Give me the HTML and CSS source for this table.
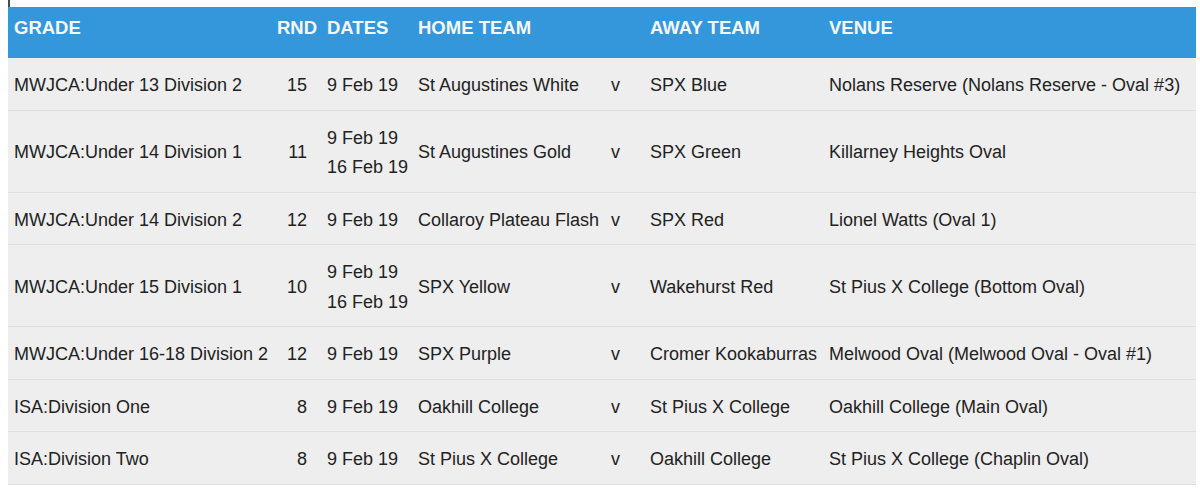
FILE: index.html
```html
<!DOCTYPE html>
<html>
<head>
<meta charset="utf-8">
<link rel="stylesheet" href="styles.css">
</head>
<body>
<div class="page">
  <div class="topline"></div>
  <table class="fixtures">
    <colgroup>
      <col class="c-grade"><col class="c-rnd"><col class="c-dates"><col class="c-home"><col class="c-v"><col class="c-away"><col class="c-venue">
    </colgroup>
    <thead>
      <tr>
        <th>GRADE</th><th>RND</th><th>DATES</th><th>HOME TEAM</th><th></th><th>AWAY TEAM</th><th>VENUE</th>
      </tr>
    </thead>
    <tbody>
      <tr>
        <td>MWJCA:Under 13 Division 2</td><td class="rnd">15</td><td>9 Feb 19</td><td>St Augustines White</td><td>v</td><td>SPX Blue</td><td>Nolans Reserve (Nolans Reserve - Oval #3)</td>
      </tr>
      <tr>
        <td>MWJCA:Under 14 Division 1</td><td class="rnd">11</td><td>9 Feb 19<br>16 Feb 19</td><td>St Augustines Gold</td><td>v</td><td>SPX Green</td><td>Killarney Heights Oval</td>
      </tr>
      <tr>
        <td>MWJCA:Under 14 Division 2</td><td class="rnd">12</td><td>9 Feb 19</td><td>Collaroy Plateau Flash</td><td>v</td><td>SPX Red</td><td>Lionel Watts (Oval 1)</td>
      </tr>
      <tr>
        <td>MWJCA:Under 15 Division 1</td><td class="rnd">10</td><td>9 Feb 19<br>16 Feb 19</td><td>SPX Yellow</td><td>v</td><td>Wakehurst Red</td><td>St Pius X College (Bottom Oval)</td>
      </tr>
      <tr>
        <td>MWJCA:Under 16-18 Division 2</td><td class="rnd">12</td><td>9 Feb 19</td><td>SPX Purple</td><td>v</td><td>Cromer Kookaburras</td><td>Melwood Oval (Melwood Oval - Oval #1)</td>
      </tr>
      <tr>
        <td>ISA:Division One</td><td class="rnd">8</td><td>9 Feb 19</td><td>Oakhill College</td><td>v</td><td>St Pius X College</td><td>Oakhill College (Main Oval)</td>
      </tr>
      <tr>
        <td>ISA:Division Two</td><td class="rnd">8</td><td>9 Feb 19</td><td>St Pius X College</td><td>v</td><td>Oakhill College</td><td>St Pius X College (Chaplin Oval)</td>
      </tr>
    </tbody>
  </table>
</div>
</body>
</html>
```

FILE: styles.css
```css
html, body {
  margin: 0;
  padding: 0;
  background: #ffffff;
}

.page {
  padding: 0 4px 0 8px;
  font-family: "Liberation Sans", Arial, sans-serif;
}

.topline {
  height: 7px;
  width: 0;
  border-left: 2px solid #4a4a4a;
}

.fixtures {
  width: 1188px;
  table-layout: fixed;
  border-collapse: collapse;
  font-size: 18px;
  color: #222222;
}

.c-grade { width: 263px; }
.c-rnd { width: 50px; }
.c-dates { width: 91px; }
.c-home { width: 193px; }
.c-v { width: 39px; }
.c-away { width: 179px; }
.c-venue { width: auto; }

.fixtures th {
  background: #3597db;
  color: #f4f8fc;
  font-weight: bold;
  font-size: 18.5px;
  text-align: left;
  padding: 0 0 9px 6px;
  height: 42px;
  line-height: 20px;
  white-space: nowrap;
  overflow: visible;
}

.fixtures td {
  background: #eeeeee;
  padding: 13px 0 9px 6px;
  line-height: 29.5px;
  border-bottom: 1px solid #dfdfdf;
  vertical-align: middle;
  white-space: nowrap;
  overflow: visible;
}

.fixtures td.rnd {
  text-align: right;
  padding-right: 14px;
  padding-left: 0;
}
```
